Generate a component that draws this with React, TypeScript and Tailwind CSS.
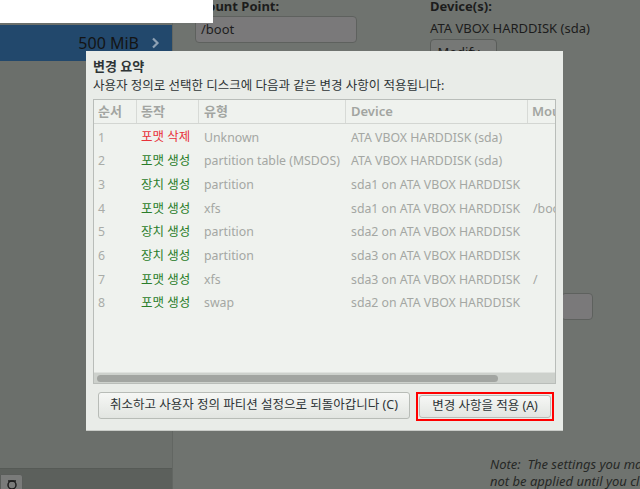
import React from "react";

type Row = [string, string, "red" | "green", string, string, string];

const rows: Row[] = [
  ["1", "포맷 삭제", "red", "Unknown", "ATA VBOX HARDDISK (sda)", ""],
  ["2", "포맷 생성", "green", "partition table (MSDOS)", "ATA VBOX HARDDISK (sda)", ""],
  ["3", "장치 생성", "green", "partition", "sda1 on ATA VBOX HARDDISK", ""],
  ["4", "포맷 생성", "green", "xfs", "sda1 on ATA VBOX HARDDISK", "/boot"],
  ["5", "장치 생성", "green", "partition", "sda2 on ATA VBOX HARDDISK", ""],
  ["6", "장치 생성", "green", "partition", "sda3 on ATA VBOX HARDDISK", ""],
  ["7", "포맷 생성", "green", "xfs", "sda3 on ATA VBOX HARDDISK", "/"],
  ["8", "포맷 생성", "green", "swap", "sda2 on ATA VBOX HARDDISK", ""],
];

export default function App() {
  return (
    <div className="relative w-[640px] h-[489px] overflow-hidden bg-[#6e726e] font-['Noto_Sans','Noto_Sans_CJK_KR',sans-serif] flex">
      {/* left column */}
      <div className="w-[173px] h-full flex flex-col bg-[#6b6f6b] border-r border-[#626662] shrink-0">
        <div className="h-[25px]" />
        <div className="h-[36px] bg-[#22486c] flex items-center justify-end pr-[12px] gap-[12px]">
          <span className="text-[16px] leading-[18px] text-[#141414]">500 MiB</span>
          <svg width="9" height="12" viewBox="0 0 9 12">
            <path d="M2 1.5 L6.5 6 L2 10.5" fill="none" stroke="#8ea1b4" strokeWidth="2.2" />
          </svg>
        </div>
        <div className="flex-1" />
        <div className="h-[21px] bg-[#5c605c] border-t border-[#565a56] pt-[5px]">
          <div className="w-[23px] h-[16px] bg-[#7a7b7a] border border-[#5a5d5a] rounded-tr-[3px] flex items-start justify-center pt-[3px]">
            <svg width="12" height="12" viewBox="0 0 12 12">
              <circle cx="6" cy="7" r="4" fill="none" stroke="#1e1e1e" strokeWidth="1.5" />
              <path d="M2 3 H10" stroke="#1e1e1e" strokeWidth="1.5" />
            </svg>
          </div>
        </div>
      </div>

      {/* right area */}
      <div className="flex-1 h-full flex flex-col bg-[#6f736f]">
        <div className="flex pl-[22px]">
          <div className="w-[162px] flex flex-col">
            <div className="text-[13px] leading-[13px] font-bold text-[#1c1c1c] whitespace-nowrap">Mount Point:</div>
            <div className="mt-[3px] h-[27px] rounded-[4px] bg-[#7a797a] border border-[#5e615e] flex items-center pl-[5px] text-[13px] text-[#1e1e1e]">
              /boot
            </div>
          </div>
          <div className="ml-[73px] flex flex-col">
            <div className="text-[13px] leading-[13px] font-bold text-[#1c1c1c]">Device(s):</div>
            <div className="mt-[7px] text-[13px] leading-[16px] text-[#1c1c1c] whitespace-nowrap">ATA VBOX HARDDISK (sda)</div>
            <div className="mt-[3px] w-[67px] h-[28px] rounded-[4px] bg-[#767876] border border-[#5a5d5a] flex items-center justify-center text-[13px] text-[#1c1c1c]">
              Modify...
            </div>
          </div>
        </div>
        <div className="mt-[226px] ml-[388px] w-[32px] h-[27px] rounded-[4px] bg-[#7a797a] border border-[#5e615e]" />
        <div className="flex-1" />
        <div className="ml-[317px] mb-[-1px] text-[13px] leading-[17px] italic text-[#262826] whitespace-nowrap">
          <div>Note:&nbsp; The settings you make on this screen will</div>
          <div>not be applied until you click on the main menu's</div>
        </div>
      </div>

      {/* white popup at top-left */}
      <div className="absolute left-0 top-0 w-[213px] h-[23px] bg-white" />

      {/* dialog */}
      <div className="absolute left-[86px] top-[51px] w-[477px] h-[380px] bg-[#e9ece8] border-b border-[#c9ccc8] flex flex-col">
        <div className="pl-[7px] mt-[7px] h-[16px] text-[13px] leading-[16px] font-bold text-[#2e3436]">변경 요약</div>
        <div className="pl-[7px] mt-[4px] h-[16px] text-[12.5px] leading-[16px] text-[#2e3436] whitespace-nowrap">
          사용자 정의로 선택한 디스크에 다음과 같은 변경 사항이 적용됩니다:
        </div>
        <div className="mx-[7px] mt-[5px] h-[285px] border border-[#b9bdb9] bg-[#eff2ee] flex flex-col overflow-hidden">
          {/* header */}
          <div className="h-[24px] flex border-b border-[#d3d6d2] text-[13px] font-semibold text-[#a2a5a1] shrink-0">
            <div className="w-[43px] pl-[4px] flex items-center border-r border-[#d7dad6]">순서</div>
            <div className="w-[62px] pl-[4px] flex items-center border-r border-[#d7dad6]">동작</div>
            <div className="w-[147px] pl-[5px] flex items-center border-r border-[#d7dad6]">유형</div>
            <div className="w-[182px] pl-[5px] flex items-center border-r border-[#d7dad6]">Device</div>
            <div className="flex-1 pl-[4px] flex items-center whitespace-nowrap overflow-hidden">Mount</div>
          </div>
          <div className="flex-1 pt-[2px] text-[12.3px]">
            {rows.map((r) => (
              <div key={r[0]} className="h-[23.7px] flex items-center whitespace-nowrap">
                <div className="w-[43px] pl-[4px] text-[#a9aca8]">{r[0]}</div>
                <div className={`w-[62px] pl-[4px] text-[12.5px] ${r[2] === "red" ? "text-[#e8313a]" : "text-[#2a7d2a]"}`}>{r[1]}</div>
                <div className="w-[147px] pl-[5px] text-[#a4a7a3]">{r[3]}</div>
                <div className="w-[182px] pl-[5px] text-[#a4a7a3]">{r[4]}</div>
                <div className="flex-1 pl-[5px] text-[#a4a7a3] overflow-hidden">{r[5]}</div>
              </div>
            ))}
          </div>
          {/* scrollbar */}
          <div className="h-[11px] bg-[#cdd1cc] border-t border-[#dfe2de] shrink-0 flex items-center pl-[3px]">
            <div className="w-[401px] h-[7px] rounded-full bg-[#a2a5a1]" />
          </div>
        </div>
        <div className="mt-[8px] flex items-start">
          <div className="ml-[12px] w-[312px] h-[27px] rounded-[3px] border border-[#b8bcb7] bg-gradient-to-b from-[#f6f7f5] to-[#e2e5e1] flex items-center justify-center text-[12.5px] text-[#2e3436] whitespace-nowrap">
            취소하고 사용자 정의 파티션 설정으로 되돌아갑니다 (C)
          </div>
          <div className="ml-[6px] w-[138px] h-[29px] border-2 border-[#ff0000] p-[1px]">
            <div className="w-full h-[23px] rounded-[3px] border border-[#b8bcb7] bg-gradient-to-b from-[#f6f7f5] to-[#e2e5e1] flex items-center justify-center text-[12.5px] text-[#2e3436] whitespace-nowrap">
              변경 사항을 적용 (A)
            </div>
          </div>
        </div>
      </div>
    </div>
  );
}
